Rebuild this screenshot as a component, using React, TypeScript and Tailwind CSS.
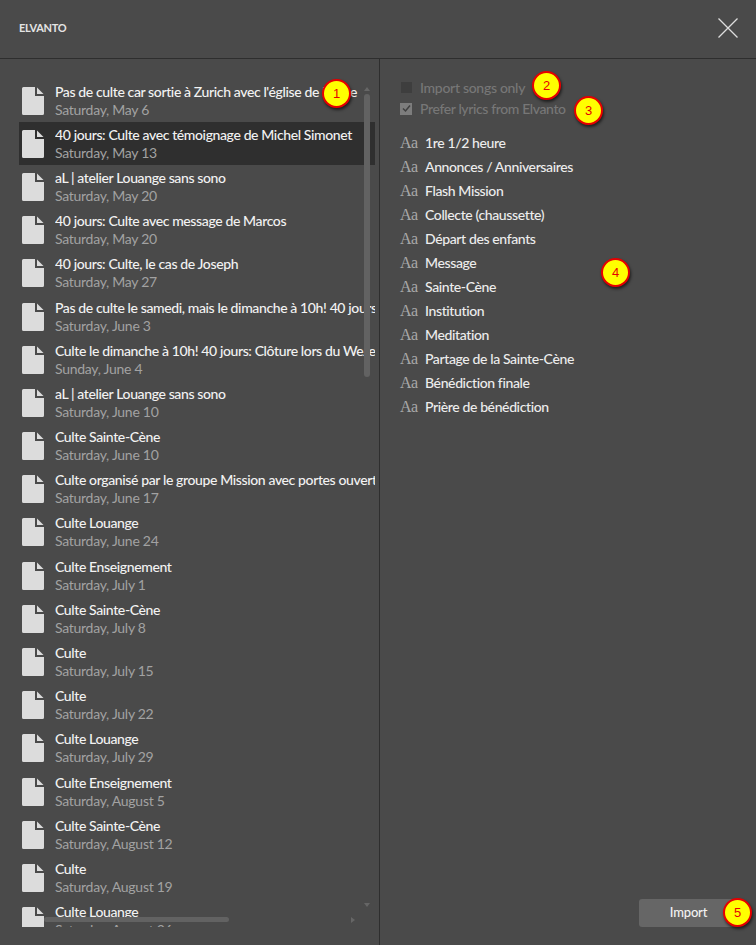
const rows: [string, string][] = [
  ["Pas de culte car sortie à Zurich avec l'église de Berne", "Saturday, May 6"],
  ["40 jours: Culte avec témoignage de Michel Simonet", "Saturday, May 13"],
  ["aL | atelier Louange sans sono", "Saturday, May 20"],
  ["40 jours: Culte avec message de Marcos", "Saturday, May 20"],
  ["40 jours: Culte, le cas de Joseph", "Saturday, May 27"],
  ["Pas de culte le samedi, mais le dimanche à 10h! 40 jours: Clôture", "Saturday, June 3"],
  ["Culte le dimanche à 10h! 40 jours: Clôture lors du WeJe à Lausanne", "Sunday, June 4"],
  ["aL | atelier Louange sans sono", "Saturday, June 10"],
  ["Culte Sainte-Cène", "Saturday, June 10"],
  ["Culte organisé par le groupe Mission avec portes ouvertes", "Saturday, June 17"],
  ["Culte Louange", "Saturday, June 24"],
  ["Culte Enseignement", "Saturday, July 1"],
  ["Culte Sainte-Cène", "Saturday, July 8"],
  ["Culte", "Saturday, July 15"],
  ["Culte", "Saturday, July 22"],
  ["Culte Louange", "Saturday, July 29"],
  ["Culte Enseignement", "Saturday, August 5"],
  ["Culte Sainte-Cène", "Saturday, August 12"],
  ["Culte", "Saturday, August 19"],
  ["Culte Louange", "Saturday, August 26"],
];

const items = [
  "1re 1/2 heure",
  "Annonces / Anniversaires",
  "Flash Mission",
  "Collecte (chaussette)",
  "Départ des enfants",
  "Message",
  "Sainte-Cène",
  "Institution",
  "Meditation",
  "Partage de la Sainte-Cène",
  "Bénédiction finale",
  "Prière de bénédiction",
];

function DocIcon() {
  return (
    <svg width="22" height="28" viewBox="0 0 22 28" className="shrink-0">
      <path d="M1.5 0H13V9H22V26.5A1.5 1.5 0 0 1 20.5 28H1.5A1.5 1.5 0 0 1 0 26.5V1.5A1.5 1.5 0 0 1 1.5 0Z" fill="#dcdcdc" />
      <path d="M15 0.5L21.5 7H15Z" fill="#dcdcdc" />
    </svg>
  );
}

function Callout({ n, className }: { n: number; className: string }) {
  return (
    <div
      className={`absolute flex h-[29px] w-[29px] items-center justify-center rounded-full border-[2.5px] border-[#e60000] bg-[#ffff00] text-[13px] tracking-normal text-[#e60000] shadow-[1px_2px_3px_rgba(0,0,0,0.6)] font-['Liberation_Sans',sans-serif] ${className}`}
    >
      {n}
    </div>
  );
}

export default function App() {
  return (
    <div className="relative flex h-[945px] w-[756px] flex-col overflow-hidden bg-[#4a4a4a] font-['Lato',sans-serif] text-[14px] tracking-[-0.38px]">
      <header className="flex h-[59px] shrink-0 items-center justify-between border-b border-[#2e2e2e] pb-[2px] pl-[19px] pr-[18px]">
        <span className="text-[11px] font-bold tracking-[-0.3px] text-[#e4e4e4]">ELVANTO</span>
        <svg width="20" height="20" viewBox="0 0 20 20">
          <path d="M0.5 0.5L19.5 19.5M19.5 0.5L0.5 19.5" stroke="#dddddd" strokeWidth="1.3" fill="none" />
        </svg>
      </header>
      <main className="flex min-h-0 flex-1">
        <section className="relative w-[380px] shrink-0 border-r border-[#2e2e2e] pb-[18px] pl-[19px] pr-[4px] pt-[20px]">
          <div className="h-full overflow-hidden">
            {rows.map(([title, date], i) => (
              <div
                key={i}
                className={`flex h-[43.2px] items-center gap-[11px] pl-[3px] ${i === 1 ? "bg-[#2f2f2f]" : ""}`}
              >
                <DocIcon />
                <div className="min-w-0 flex-1 overflow-hidden whitespace-nowrap leading-[18px]">
                  <div className="font-medium text-[#f2f2f2]">{title}</div>
                  <div className="tracking-[-0.28px] text-[#a2a2a2]">{date}</div>
                </div>
              </div>
            ))}
          </div>
          <div className="absolute left-[364px] top-[28px] h-0 w-0 border-x-[3.5px] border-b-[4px] border-x-transparent border-b-[#666666]" />
          <div className="absolute left-[364px] top-[35px] h-[283px] w-[6px] rounded-[3px] bg-[#626262]" />
          <div className="absolute left-[364px] top-[844px] h-0 w-0 border-x-[3.5px] border-t-[4px] border-x-transparent border-t-[#666666]" />
          <div className="absolute left-[44px] top-[858px] h-[5px] w-[185px] rounded-[3px] bg-[#626262]" />
          <div className="absolute left-[351px] top-[858px] h-0 w-0 border-y-[3.5px] border-l-[4px] border-y-transparent border-l-[#666666]" />
        </section>
        <section className="relative flex flex-1 flex-col pl-[20px] pr-[18px] pt-[18px]">
          <label className="flex h-[21px] items-center gap-[8px] text-[#777777]">
            <span className="ml-[1px] h-[11px] w-[11px] bg-[#3e3e3e]" />
            <span className="font-medium tracking-[-0.3px]">Import songs only</span>
          </label>
          <label className="flex h-[21px] items-center gap-[8px] text-[#777777]">
            <span className="flex h-[12px] w-[12px] items-center justify-center bg-[#7d7d7d]">
              <svg width="9" height="9" viewBox="0 0 9 9">
                <path d="M1 4.5L3.5 7L8 1.5" stroke="#404040" strokeWidth="1.5" fill="none" />
              </svg>
            </span>
            <span className="font-medium">Prefer lyrics from Elvanto</span>
          </label>
          <ul className="mt-[11px]">
            {items.map((t) => (
              <li key={t} className="flex h-[24px] items-center gap-[9px]">
                <span className="w-[16px] whitespace-nowrap pt-[1px] font-['Liberation_Serif',serif] text-[16px] tracking-[-0.6px] text-[#a8a8a8]">Aa</span>
                <span className="font-medium text-[#ededed]">{t}</span>
              </li>
            ))}
          </ul>
          <div className="mt-auto flex justify-end pb-[18px]">
            <button className="flex h-[28px] w-[99px] items-center justify-center rounded-[3px] bg-[#666666] text-[13px] font-medium tracking-[-0.2px] text-[#f2f2f2]">
              Import
            </button>
          </div>
        </section>
      </main>
      <Callout n={1} className="left-[322px] top-[79px]" />
      <Callout n={2} className="left-[532px] top-[71px]" />
      <Callout n={3} className="left-[574px] top-[96px]" />
      <Callout n={4} className="left-[601px] top-[258px]" />
      <Callout n={5} className="left-[723px] top-[898px]" />
    </div>
  );
}
